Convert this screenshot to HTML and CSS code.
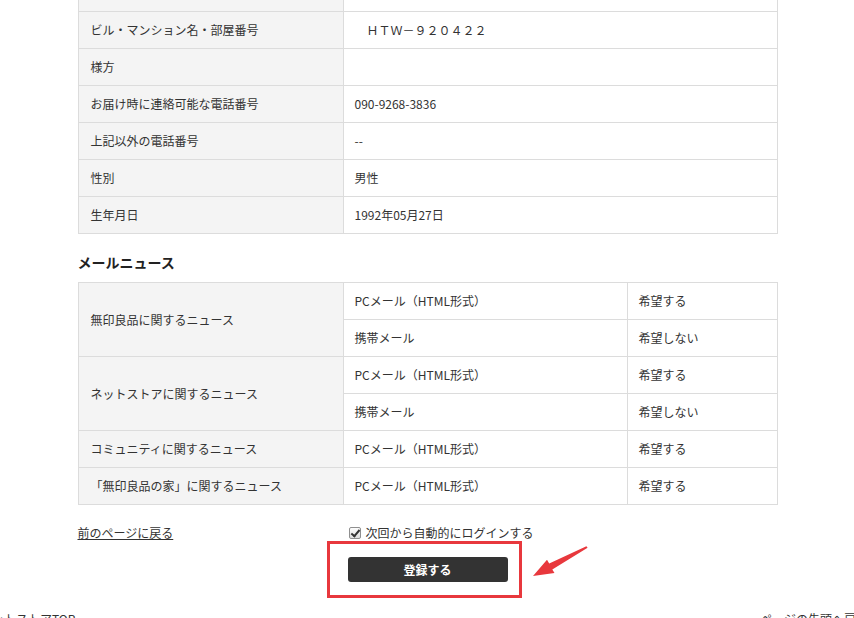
FILE: index.html
```html
<!DOCTYPE html>
<html lang="ja">
<head>
    <meta charset="UTF-8">
    <meta name="viewport" content="width=device-width, initial-scale=1.0">
    <title>会員登録内容の確認</title>
    <link rel="stylesheet" href="styles.css">
</head>
<body>
    <div class="page">
        <table class="info">
            <tr class="cut"><th>&nbsp;</th><td>&nbsp;</td></tr>
            <tr><th>ビル・マンション名・部屋番号</th><td>　ＨＴＷ－９２０４２２</td></tr>
            <tr><th>様方</th><td></td></tr>
            <tr><th>お届け時に連絡可能な電話番号</th><td>090-9268-3836</td></tr>
            <tr><th>上記以外の電話番号</th><td>--</td></tr>
            <tr><th>性別</th><td>男性</td></tr>
            <tr><th>生年月日</th><td>1992年05月27日</td></tr>
        </table>

        <h3 class="section-title">メールニュース</h3>

        <table class="news">
            <colgroup>
                <col class="col-label">
                <col class="col-type">
                <col class="col-wish">
            </colgroup>
            <tr>
                <th rowspan="2">無印良品に関するニュース</th>
                <td>PCメール（HTML形式）</td>
                <td class="wish">希望する</td>
            </tr>
            <tr>
                <td>携帯メール</td>
                <td class="wish">希望しない</td>
            </tr>
            <tr>
                <th rowspan="2">ネットストアに関するニュース</th>
                <td>PCメール（HTML形式）</td>
                <td class="wish">希望する</td>
            </tr>
            <tr>
                <td>携帯メール</td>
                <td class="wish">希望しない</td>
            </tr>
            <tr>
                <th>コミュニティに関するニュース</th>
                <td>PCメール（HTML形式）</td>
                <td class="wish">希望する</td>
            </tr>
            <tr>
                <th>「無印良品の家」に関するニュース</th>
                <td>PCメール（HTML形式）</td>
                <td class="wish">希望する</td>
            </tr>
        </table>

        <div class="actions">
            <a href="#" class="back-link">前のページに戻る</a>
            <div class="submit-area">
                <label class="auto-login">
                    <input type="checkbox" class="check" checked>
                    <span>次回から自動的にログインする</span>
                </label>
                <div class="button-wrap">
                    <button type="button" class="button">登録する</button>
                    <span class="highlight"></span>
                    <svg class="arrow" width="64" height="40" viewBox="0 0 64 40">
                        <polygon points="5,34 26.5,31 24.3,27.4 59.6,5.8 58.4,4.2 21.2,21.6 19,17.8" fill="#e8383d"/>
                    </svg>
                </div>
            </div>
        </div>
    </div>

    <div class="footer">
        <a href="#" class="footer-left">ネットストアTOP</a>
        <a href="#" class="footer-right">ページの先頭へ戻る</a>
    </div>
</body>
</html>
```

FILE: styles.css
```css
html, body {
    overflow: hidden;
}
body {
    margin: 0;
    background-color: #fff;
    color: #333;
    font-family: "Noto Sans CJK JP", "Noto Sans", sans-serif;
    font-size: 12px;
}
.page {
    width: 700px;
    margin: -26px auto 0;
    padding-left: 1px;
}
table {
    width: 100%;
    border-collapse: collapse;
    table-layout: fixed;
}
th, td {
    height: 36px;
    padding: 0 11px;
    border: 1px solid #dcdcdc;
    text-align: left;
    font-weight: normal;
    line-height: 18px;
}
th {
    width: 265px;
    box-sizing: border-box;
    padding-left: 12px;
    background-color: #f4f4f4;
}
.section-title {
    margin: 18px 0 10px;
    font-size: 14px;
    line-height: 20px;
    font-weight: bold;
    color: #222;
}
.col-label {
    width: 265px;
}
.col-type {
    width: 284px;
}
.wish {
    padding-left: 11px;
}
.actions {
    display: grid;
    grid-template-columns: 270px 1fr;
    margin-top: 18px;
}
.back-link {
    color: #333;
    text-decoration: underline;
    line-height: 20px;
    align-self: start;
}
.auto-login {
    display: flex;
    align-items: center;
    gap: 5px;
    line-height: 20px;
    margin-left: 1px;
}
.check {
    appearance: none;
    position: relative;
    width: 12px;
    height: 12px;
    margin: 0;
    border: 1px solid #8f8f8f;
    border-radius: 2px;
    background: linear-gradient(#fdfdfd, #dcdcdc);
}
.check::after {
    content: "";
    position: absolute;
    left: 3px;
    top: 0;
    width: 3px;
    height: 7px;
    border: solid #333;
    border-width: 0 2px 2px 0;
    transform: rotate(40deg);
}
.button-wrap {
    position: relative;
    width: 160px;
    margin-top: 14px;
}
.button {
    display: block;
    width: 160px;
    height: 25px;
    border: none;
    border-radius: 3px;
    background-color: #333;
    color: #fff;
    font-family: inherit;
    font-size: 12px;
    font-weight: bold;
    cursor: pointer;
}
.highlight {
    position: absolute;
    left: -21px;
    top: -16px;
    width: 189px;
    height: 51px;
    border: 3px solid #e8383d;
}
.arrow {
    position: absolute;
    left: 180px;
    top: -15px;
}
.footer {
    display: flex;
    justify-content: space-between;
    margin-top: 28px;
    line-height: 18px;
}
.footer a {
    color: #333;
    text-decoration: none;
    white-space: nowrap;
}
.footer-left {
    margin-left: -20px;
}
.footer-right {
    margin-right: -14px;
}
```
